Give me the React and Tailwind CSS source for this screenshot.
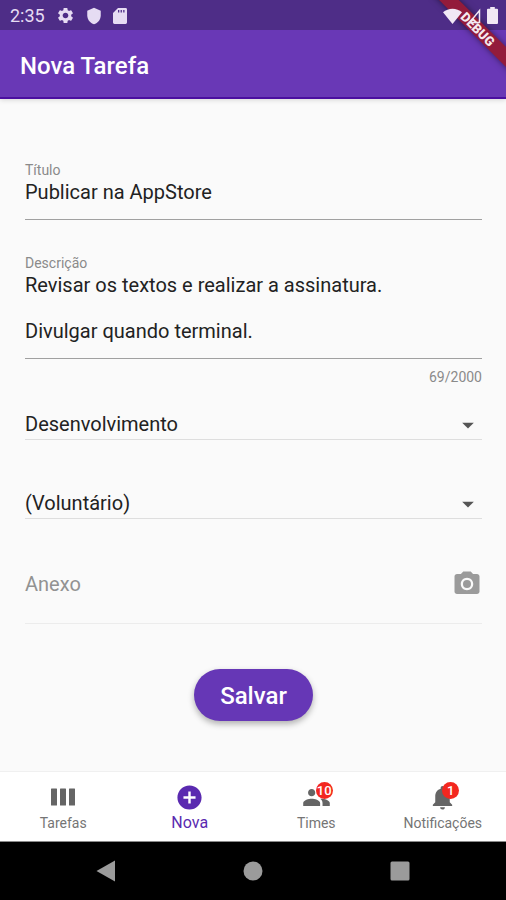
import React, { useState } from 'react'
import {
    MdSettings,
    MdShield,
    MdArrowDropDown,
    MdCameraAlt,
    MdAddCircle,
    MdPeople,
    MdNotifications
} from 'react-icons/md'

const MAX_DESCRIPTION = 2000

function StatusBar() {
    return (
        <div className="relative z-20 flex h-[30px] items-center justify-between bg-[#4e2d87] pl-[10px] pr-2 pt-px text-[#e6dcf3]">
            <div className="flex items-center gap-[10px]">
                <span className="mr-px text-lg leading-none">2:35</span>
                <MdSettings size={19} />
                <MdShield size={18} />
                <svg width="14" height="16" viewBox="0 0 14 16" fill="currentColor">
                    <path fillRule="evenodd" d="M5 0h7.600A1.400 1.400 0 0 1 14 1.400v13.200a1.400 1.400 0 0 1-1.400 1.400H1.400A1.400 1.400 0 0 1 0 14.600V5zM5 2v2.500h1.300V2zm2.600 0v2.500h1.300V2zm2.600 0v2.500h1.300V2z" />
                </svg>
            </div>
            <DebugBanner />
            <div className="relative z-10 flex items-center gap-[6px] text-[#f1e8f5]">
                <svg width="19" height="16" viewBox="0 0 19 16" fill="currentColor">
                    <path d="M9.500 16 0 4.200C2.700 2 6 .8 9.500 .8S16.300 2 19 4.200z" />
                </svg>
                <svg width="13" height="16" viewBox="0 0 13 16" fill="none" stroke="currentColor" strokeWidth="1.500">
                    <path d="M11.500 2.500v12H1.500z" />
                </svg>
                <svg width="11" height="17" viewBox="0 0 11 17" fill="currentColor">
                    <path d="M3.200 0h4.600v1.700H10a1 1 0 0 1 1 1V16a1 1 0 0 1-1 1H1a1 1 0 0 1-1-1V2.700a1 1 0 0 1 1-1h2.200z" />
                </svg>
            </div>
        </div>
    )
}

function DebugBanner() {
    return (
        <div className="absolute right-0 top-0 size-20 overflow-hidden">
            <div className="absolute -right-8 top-[22px] flex h-[14px] w-[120px] rotate-45 items-center justify-center bg-[#931b3b] text-[13px] font-black leading-none text-[#f6e9ee] shadow-[0_0_6px_rgba(0,0,0,0.5)]">
                DEBUG
            </div>
        </div>
    )
}

function SelectField({ label, options }) {
    return (
        <div className="relative border-b border-[#dedede]">
            <select
                aria-label={label}
                className="mb-px block h-[27px] w-full appearance-none bg-transparent pr-10 text-xl leading-[27px] text-[#222] outline-none"
            >
                {options.map((option) => (
                    <option key={option}>{option}</option>
                ))}
            </select>
            <MdArrowDropDown size={28} className="pointer-events-none absolute right-0 top-0 text-[#555]" />
        </div>
    )
}

function ColumnsIcon() {
    return (
        <svg width="24" height="28" viewBox="0 0 24 28" fill="currentColor">
            <rect x="0" y="5.500" width="6" height="17" rx="0.500" />
            <rect x="9" y="5.500" width="6" height="17" rx="0.500" />
            <rect x="18" y="5.500" width="6" height="17" rx="0.500" />
        </svg>
    )
}

function NavItem({ icon, label, active, badge }) {
    return (
        <a
            href="#"
            aria-current={active ? 'page' : undefined}
            className={`flex flex-1 flex-col items-center pt-[11px] ${active ? 'text-[#5a2ab0]' : 'text-[#757575]'}`}
        >
            <span className={`relative flex h-7 items-center ${active ? '' : 'text-[#656565]'}`}>
                {icon}
                {badge && (
                    <span className="absolute -right-0.5 -top-px flex h-[17px] min-w-[17px] items-center justify-center rounded-full bg-[#f3271f] px-px text-[13px] font-medium leading-none text-white">
                        {badge}
                    </span>
                )}
            </span>
            <span className={active ? 'text-base leading-6' : 'text-sm leading-6'}>{label}</span>
        </a>
    )
}

function SystemNav() {
    return (
        <div className="flex h-[58px] items-center justify-around bg-black px-8 text-[#9b9b9b]">
            <button type="button" aria-label="Back">
                <svg width="20" height="22" viewBox="0 0 20 22" fill="currentColor">
                    <path d="M19 .5v21L.5 11z" />
                </svg>
            </button>
            <button type="button" aria-label="Home">
                <svg width="20" height="20" viewBox="0 0 20 20" fill="currentColor">
                    <circle cx="10" cy="10" r="9.500" />
                </svg>
            </button>
            <button type="button" aria-label="Recents">
                <svg width="20" height="20" viewBox="0 0 20 20" fill="currentColor">
                    <rect x="0.500" y="0.500" width="19" height="19" rx="1.500" />
                </svg>
            </button>
        </div>
    )
}

export default function App() {
    const [title, setTitle] = useState('Publicar na AppStore')
    const [description, setDescription] = useState(
        'Revisar os textos e realizar a assinatura.\n\nDivulgar quando terminal.'
    )

    return (
        <div className="flex min-h-screen flex-col bg-[#fafafa] font-['Roboto',sans-serif]">
            <StatusBar />
            <header className="relative z-10 flex h-[69px] items-center border-b-2 border-[#4b0fa0] bg-[#6938b6] px-5 pt-1 shadow-[0_1px_5px_rgba(0,0,0,0.15)]">
                <h1 className="text-2xl font-medium text-white">Nova Tarefa</h1>
            </header>

            <main className="flex-1 pl-[25px] pr-6 pt-[61px]">
                <form onSubmit={(e) => e.preventDefault()}>
                    <div className="border-b border-[#a0a0a0]">
                        <label htmlFor="title" className="block text-sm leading-5 text-[#8a8a8a]">Título</label>
                        <input
                            id="title"
                            value={title}
                            onChange={(e) => setTitle(e.target.value)}
                            className="mb-[15px] mt-px block h-[23px] w-full bg-transparent text-xl leading-[23px] text-[#222] outline-none"
                        />
                    </div>

                    <div className="mt-[33px] border-b border-[#a0a0a0]">
                        <label htmlFor="description" className="block text-sm leading-5 text-[#8a8a8a]">Descrição</label>
                        <textarea
                            id="description"
                            rows={3}
                            maxLength={MAX_DESCRIPTION}
                            value={description}
                            onChange={(e) => setDescription(e.target.value)}
                            className="mb-[15px] mt-px block w-full resize-none overflow-hidden bg-transparent text-xl leading-[23px] text-[#222] outline-none"
                        />
                    </div>
                    <div className="pt-2 text-right text-sm leading-5 text-[#8a8a8a]">
                        {description.length}/{MAX_DESCRIPTION}
                    </div>

                    <div className="mt-6 flex flex-col gap-[50px]">
                        <SelectField label="Time" options={['Desenvolvimento']} />
                        <SelectField label="Responsável" options={['(Voluntário)']} />
                    </div>

                    <div className="mt-[50px] flex items-center justify-between border-b border-[#ececec] pb-6">
                        <span className="text-xl text-[#929292]">Anexo</span>
                        <button type="button" aria-label="Anexo" className="text-[#9b9b9b]">
                            <MdCameraAlt size={30} />
                        </button>
                    </div>

                    <div className="mt-[45px] flex justify-center pb-12">
                        <button
                            type="submit"
                            className="h-[52px] rounded-full bg-[#6637b6] px-[26px] pt-0.5 text-2xl font-medium text-white shadow-[0_3px_6px_rgba(0,0,0,0.3)]"
                        >
                            Salvar
                        </button>
                    </div>
                </form>
            </main>

            <nav className="flex h-[71px] border-b border-t border-b-[#8a8a8a] border-t-[#f0f0f0] bg-white">
                <NavItem icon={<ColumnsIcon />} label="Tarefas" />
                <NavItem icon={<MdAddCircle size={29} />} label="Nova" active />
                <NavItem icon={<MdPeople size={29} />} label="Times" badge="10" />
                <NavItem icon={<MdNotifications size={29} />} label="Notificações" badge="1" />
            </nav>
            <SystemNav />
        </div>
    )
}
